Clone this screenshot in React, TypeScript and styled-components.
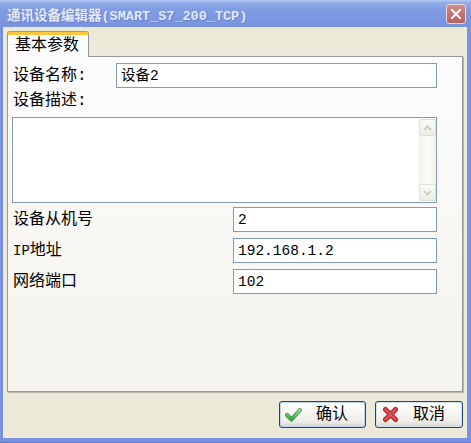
import React from "react";
import styled, { createGlobalStyle } from "styled-components";

const FONT = `"Liberation Mono", "Noto Sans CJK SC", monospace`;

const Global = createGlobalStyle`
  html, body { margin: 0; padding: 0; background: #ffffff; }
  body { width: 471px; height: 443px; overflow: hidden; }
  * { box-sizing: border-box; }
`;

const Window = styled.div`
  width: 471px;
  height: 443px;
  display: flex;
  flex-direction: column;
  font-family: ${FONT};
`;

const TitleBar = styled.div`
  height: 27px;
  flex: none;
  display: flex;
  align-items: center;
  padding: 0 5px 0 7px;
  background: linear-gradient(180deg, #b4c8f3 0%, #94aeea 10%, #809ce2 35%, #7c98e0 70%, #7893de 100%);
`;

const TitleText = styled.div`
  flex: 1;
  font-size: 13.5px;
  font-weight: bold;
  color: #e2e8f6;
  text-shadow: 1px 1px 0 #6a80cc;
  white-space: nowrap;
`;

const CloseButton = styled.div`
  width: 20px;
  height: 20px;
  border: 1px solid #e9d9dc;
  border-radius: 3px;
  background: linear-gradient(180deg, #d58c88 0%, #c57370 50%, #b9625f 100%);
  display: flex;
  align-items: center;
  justify-content: center;
`;

const Frame = styled.div`
  flex: 1;
  display: flex;
  padding: 0 4px 4px 3px;
  background: linear-gradient(90deg, #8ea5e8 0px, #6f86d7 1px, #7a93de 3px, #7a93de 100%);
  border-bottom: 1px solid #5f76cb;
`;

const Body = styled.div`
  flex: 1;
  display: flex;
  flex-direction: column;
  background: #ece9d8;
  padding: 5px 4px 10px 4px;
`;

const TabStrip = styled.div`
  display: flex;
  position: relative;
  z-index: 1;
`;

const Tab = styled.div`
  width: 82px;
  height: 25px;
  margin-bottom: -1px;
  border: 1px solid #919b9c;
  border-bottom: none;
  border-top: 3px solid #ffc83c;
  border-radius: 3px 3px 0 0;
  box-shadow: 0 -1px 0 #e68b2c;
  background: #fcfcfe;
  font-size: 16px;
  line-height: 1;
  display: flex;
  align-items: center;
  padding: 0 0 1px 7px;
  color: #000;
`;

const Panel = styled.div`
  flex: 1;
  border: 1px solid #919b9c;
  background: linear-gradient(180deg, #fcfcfe 0%, #f7f6f2 60%, #f4f3ee 100%);
  padding: 6px 25px 0 4px;
  display: flex;
  flex-direction: column;
  box-shadow: 1px 1px 0 #b9b6a8;
`;

const FieldRow = styled.div<{ $label: number }>`
  display: grid;
  grid-template-columns: ${(p) => p.$label}px 1fr;
  align-items: center;
  height: 25px;
`;

const Label = styled.div<{ $h?: number }>`
  font-size: 16px;
  line-height: 1;
  color: #000;
  padding-left: 1px;
  height: ${(p) => (p.$h ? `${p.$h}px` : "auto")};
  display: flex;
  align-items: center;
  white-space: nowrap;
`;

const Half = styled.span`
  font-size: 14px;
`;

const TextBox = styled.div`
  height: 25px;
  border: 1px solid #7f9db9;
  background: #ffffff;
  font-size: 14.5px;
  line-height: 1;
  color: #000;
  display: flex;
  align-items: center;
  padding: 1px 0 0 4px;
  white-space: nowrap;
`;

const MemoBox = styled.div`
  height: 86px;
  margin-top: 3px;
  margin-bottom: 4px;
  border: 1px solid #7f9db9;
  background: #ffffff;
  display: flex;
  justify-content: flex-end;
  padding: 1px 0 1px 0;
`;

const ScrollBar = styled.div`
  width: 17px;
  display: flex;
  flex-direction: column;
  background: linear-gradient(90deg, #f3f1e9 0%, #fbfaf7 50%, #f3f1e9 100%);
`;

const ScrollBtn = styled.div`
  height: 17px;
  border: 1px solid #e2dfd3;
  border-radius: 2px;
  background: linear-gradient(180deg, #fbfaf6 0%, #eeece3 100%);
  display: flex;
  align-items: center;
  justify-content: center;
`;

const ScrollTrack = styled.div`
  flex: 1;
`;

const Rows = styled.div`
  display: flex;
  flex-direction: column;
  gap: 6px;
`;

const ButtonBar = styled.div`
  display: flex;
  justify-content: flex-end;
  gap: 9px;
  margin-top: 9px;
`;

const Button = styled.div<{ $w: number; $default?: boolean }>`
  width: ${(p) => p.$w}px;
  height: 27px;
  border: 1px solid #1f4378;
  border-radius: 3px;
  background: linear-gradient(180deg, #ffffff 0%, #f7f7f4 40%, #ecebe5 80%, #d8d3c8 100%);
  box-shadow: inset 0 0 0 1px ${(p) => (p.$default ? "#bcd3f4" : "#d4e1f5")};
  display: flex;
  align-items: center;
  padding-left: ${(p) => (p.$default ? 5 : 6)}px;
  font-size: 16px;
  line-height: 1;
  color: #000;
`;

const ButtonIcon = styled.svg`
  width: 17px;
  height: 17px;
  flex: none;
  margin-right: 14px;
`;

const CheckIcon = () => (
  <ButtonIcon viewBox="0 0 17 17">
    <defs>
      <linearGradient id="g" x1="0" y1="0" x2="0" y2="1">
        <stop offset="0" stopColor="#9be394" />
        <stop offset="1" stopColor="#3aa845" />
      </linearGradient>
    </defs>
    <path d="M2 9 L6.5 13.5 L15 4" fill="none" stroke="#3b8f43" strokeWidth="4" strokeLinecap="round" strokeLinejoin="round" />
    <path d="M2 9 L6.5 13.5 L15 4" fill="none" stroke="url(#g)" strokeWidth="2.4" strokeLinecap="round" strokeLinejoin="round" />
  </ButtonIcon>
);

const CrossIcon = () => (
  <ButtonIcon viewBox="0 0 17 17">
    <path d="M3.5 3.5 L13.5 13.5 M13.5 3.5 L3.5 13.5" fill="none" stroke="#a8222a" strokeWidth="5" strokeLinecap="round" />
    <path d="M3.5 3.5 L13.5 13.5 M13.5 3.5 L3.5 13.5" fill="none" stroke="#e04a50" strokeWidth="3" strokeLinecap="round" />
  </ButtonIcon>
);

const Arrow = ({ up }: { up?: boolean }) => (
  <svg width="9" height="6" viewBox="0 0 9 6">
    <path
      d={up ? "M1 5 L4.5 1.5 L8 5" : "M1 1 L4.5 4.5 L8 1"}
      fill="none"
      stroke="#c9c6b8"
      strokeWidth="1.6"
    />
  </svg>
);

export default function App() {
  return (
    <>
      <Global />
      <Window>
        <TitleBar>
          <TitleText>通讯设备编辑器(SMART_S7_200_TCP)</TitleText>
          <CloseButton>
            <svg width="12" height="12" viewBox="0 0 12 12">
              <path d="M2 2 L10 10 M10 2 L2 10" stroke="#ffffff" strokeWidth="2" strokeLinecap="square" />
            </svg>
          </CloseButton>
        </TitleBar>
        <Frame>
          <Body>
            <TabStrip>
              <Tab>基本参数</Tab>
            </TabStrip>
            <Panel>
              <FieldRow $label={104}>
                <Label>设备名称:</Label>
                <TextBox>设备2</TextBox>
              </FieldRow>
              <Label $h={26}>设备描述:</Label>
              <MemoBox>
                <ScrollBar>
                  <ScrollBtn>
                    <Arrow up />
                  </ScrollBtn>
                  <ScrollTrack />
                  <ScrollBtn>
                    <Arrow />
                  </ScrollBtn>
                </ScrollBar>
              </MemoBox>
              <Rows>
                <FieldRow $label={221}>
                  <Label>设备从机号</Label>
                  <TextBox>2</TextBox>
                </FieldRow>
                <FieldRow $label={221}>
                  <Label>
                    <Half>IP</Half>地址
                  </Label>
                  <TextBox>192.168.1.2</TextBox>
                </FieldRow>
                <FieldRow $label={221}>
                  <Label>网络端口</Label>
                  <TextBox>102</TextBox>
                </FieldRow>
              </Rows>
            </Panel>
            <ButtonBar>
              <Button $w={87} $default>
                <CheckIcon />
                确认
              </Button>
              <Button $w={88}>
                <CrossIcon />
                取消
              </Button>
            </ButtonBar>
          </Body>
        </Frame>
      </Window>
    </>
  );
}
